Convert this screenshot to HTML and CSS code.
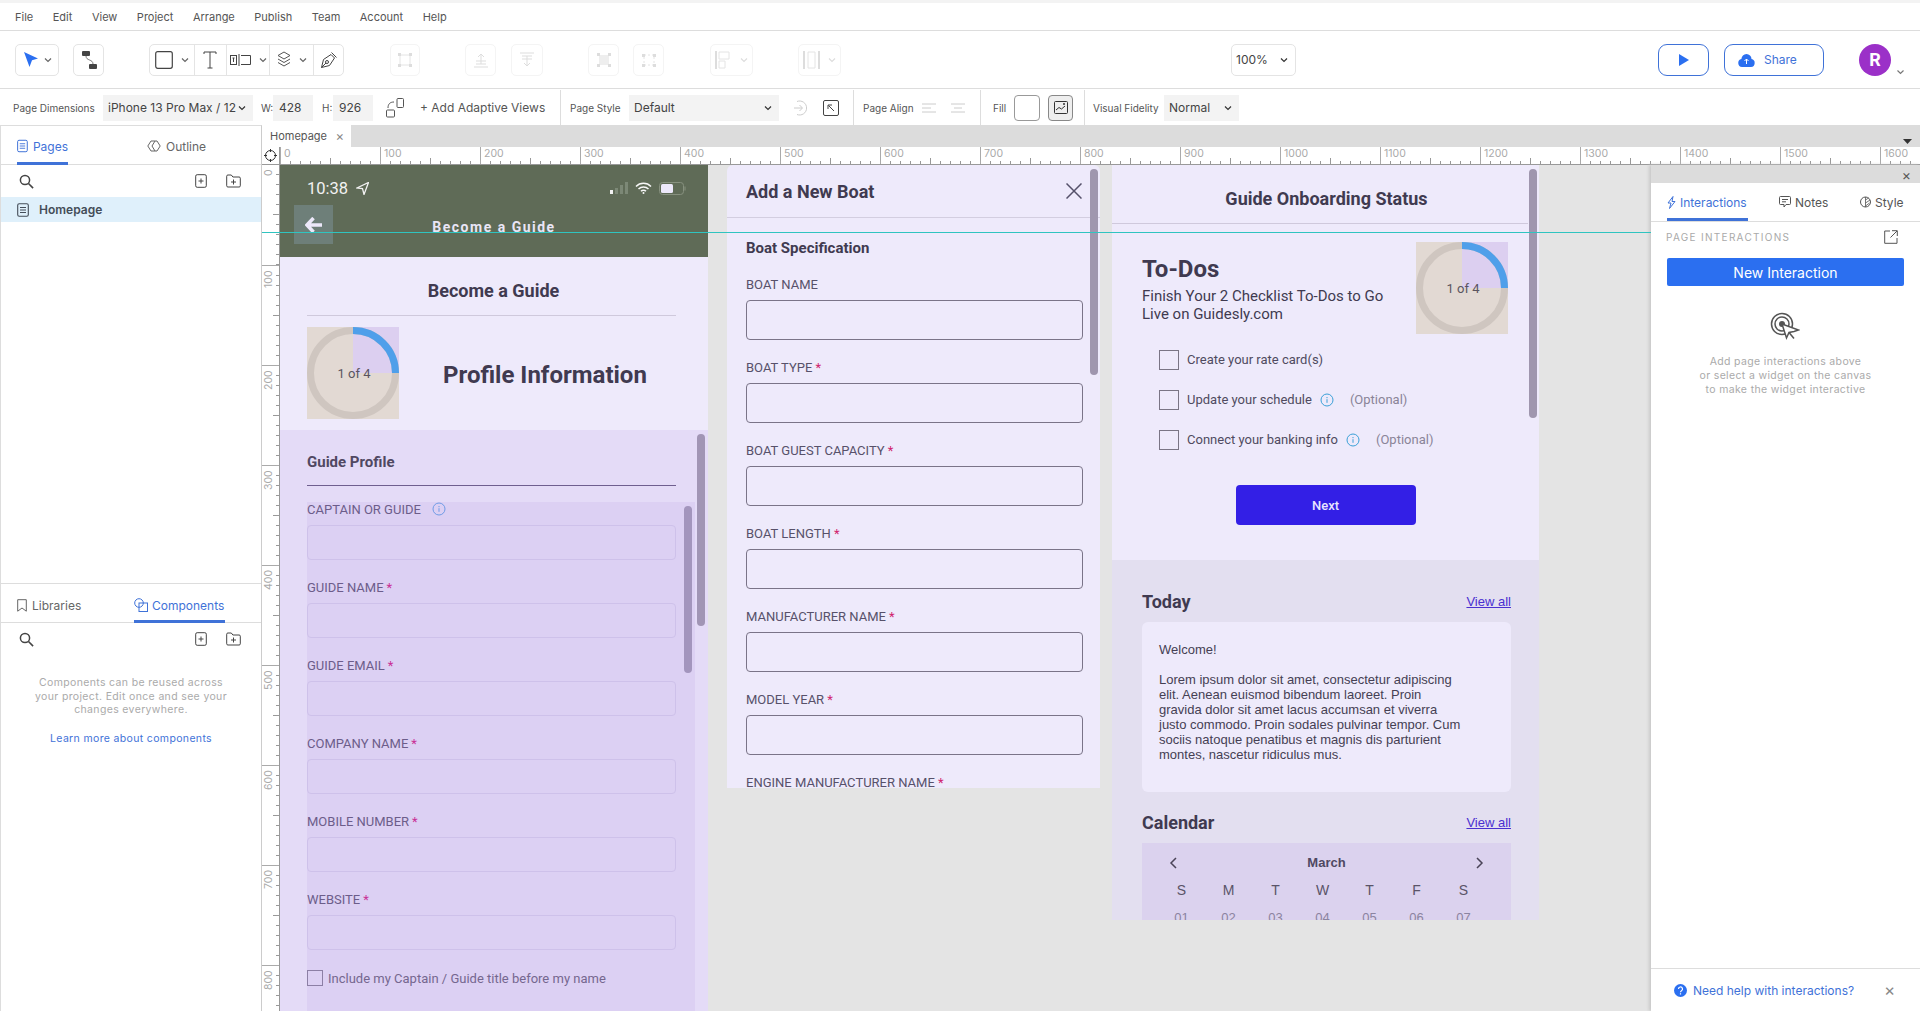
FILE: index.html
```html
<!DOCTYPE html>
<html>
  <head>
    <title>Homepage</title>
    <link rel="stylesheet" href="styles.css">
  </head>

  <body>
    <svg class="defs" width="0" height="0">
      <symbol id="chev" viewBox="0 0 8 6"><path d="M1 1.5l3 3 3-3" fill="none" stroke="currentColor" stroke-width="1.2"/></symbol>
      <symbol id="doc" viewBox="0 0 12 14"><rect x=".7" y=".7" width="10.6" height="12.6" rx="1.5" fill="none" stroke="currentColor" stroke-width="1.1"/><path d="M3 4.5h6M3 7h6M3 9.5h6" stroke="currentColor" stroke-width="1"/></symbol>
      <symbol id="search" viewBox="0 0 15 15"><circle cx="6" cy="6" r="4.6" fill="none" stroke="currentColor" stroke-width="1.5"/><path d="M9.5 9.5l4.6 4.6" stroke="currentColor" stroke-width="1.6"/></symbol>
      <symbol id="addpage" viewBox="0 0 12 14"><rect x=".7" y=".7" width="10.6" height="12.6" rx="1.5" fill="none" stroke="currentColor" stroke-width="1"/><path d="M3.5 7h5M6 4.5v5" stroke="currentColor"/></symbol>
      <symbol id="addfolder" viewBox="0 0 15 14"><path d="M.7 2.2q0-1.2 1.2-1.2h3.4l1.6 2h6.2q1.2 0 1.2 1.2v7.6q0 1.2-1.2 1.2H1.9q-1.2 0-1.2-1.2z" fill="none" stroke="currentColor" stroke-width="1"/><path d="M5 8h5M7.5 5.5v5" stroke="currentColor"/></symbol>
      <symbol id="info" viewBox="0 0 14 14"><circle cx="7" cy="7" r="6" fill="none" stroke="currentColor" stroke-width="1"/><path d="M7 6.2v3.6M7 4v1.2" stroke="currentColor"/></symbol>
      <symbol id="ring" viewBox="0 0 92 92">
        <rect width="92" height="92" fill="#e2d9d3"/>
        <rect x="46" width="46" height="46" fill="#dccff0"/>
        <circle cx="46" cy="46" r="42.5" fill="none" stroke="#cfc6c0" stroke-width="7"/>
        <path d="M46 3.5A42.5 42.5 0 0 1 88.500 46" fill="none" stroke="#4f9fea" stroke-width="7"/>
      </symbol>
    </svg>

    <div class="top-strip"></div>

    <div class="menubar">
      <span>File</span><span>Edit</span><span>View</span><span>Project</span><span>Arrange</span><span>Publish</span><span>Team</span><span>Account</span><span>Help</span>
    </div>

    <div class="toolbar">
      <div class="tool select-tool">
        <svg width="16" height="17" viewBox="0 0 16 17"><path d="M1 1l14 6.500-6 1.800-2.500 6.700z" fill="#2b6ff0"/></svg>
        <svg class="chev" width="8" height="6"><use href="#chev"/></svg>
      </div>
      <div class="tool connector-tool">
        <svg width="16" height="20" viewBox="0 0 16 20"><rect x="1" y="1" width="8" height="5" rx="1" fill="#444"/><rect x="8" y="14" width="8" height="5" rx="1" fill="#444"/><path d="M5 6c0 5 7 3 7 8" fill="none" stroke="#777"/></svg>
      </div>
      <div class="tool shapes-tool">
        <div class="seg seg-shape">
          <svg width="18" height="18" viewBox="0 0 18 18"><rect x=".7" y=".7" width="16.600" height="16.600" rx="2" fill="none" stroke="#444" stroke-width="1.200"/></svg>
          <svg class="chev" width="8" height="6"><use href="#chev"/></svg>
        </div>
        <div class="seg seg-text">
          <svg width="14" height="18" viewBox="0 0 14 18"><path d="M1 3V1h12v2M7 1v16M4.500 17h5" fill="none" stroke="#444"/></svg>
        </div>
        <div class="seg seg-field">
          <svg width="21" height="12" viewBox="0 0 21 12"><rect x=".5" y="1.500" width="6" height="9" fill="none" stroke="#444"/><path d="M2.500 4h2M3.500 4v4" stroke="#444"/><path d="M9 0v12" stroke="#444"/><path d="M11 1.500h9.500v9H11" fill="none" stroke="#444"/></svg>
          <svg class="chev" width="8" height="6"><use href="#chev"/></svg>
        </div>
        <div class="seg seg-layers">
          <svg width="14" height="17" viewBox="0 0 14 17"><path d="M7 1l6 3.500-6 3.500-6-3.500zM1 8l6 3.500L13 8M1 11.500L7 15l6-3.500" fill="none" stroke="#555"/></svg>
          <svg class="chev" width="8" height="6"><use href="#chev"/></svg>
        </div>
        <div class="seg seg-pen">
          <svg width="18" height="18" viewBox="0 0 18 18"><path d="M1.500 16.500l2-8L11 3.500l3.500 3.500-5 7.500zM1.500 16.500l4.500-4.500M11.500 1.500l5 5" fill="none" stroke="#444"/><circle cx="7" cy="11" r="1.500" fill="none" stroke="#444"/></svg>
        </div>
      </div>

      <div class="tool off off-1"><svg width="16" height="16" viewBox="0 0 16 16"><path d="M3 3h10v10H3z" fill="none" stroke="#e4e4e4"/><path d="M1 1h3v3H1zM12 1h3v3h-3zM1 12h3v3H1zM12 12h3v3h-3z" fill="#ddd"/></svg></div>
      <div class="tool off off-2"><svg width="16" height="16" viewBox="0 0 16 16"><path d="M1 15h14M3 12h10M3 9h10M8 2v10M5 5l3-3 3 3" fill="none" stroke="#ddd"/></svg></div>
      <div class="tool off off-3"><svg width="16" height="16" viewBox="0 0 16 16"><path d="M1 1h14M3 4h10M3 7h10M8 4v10M5 11l3 3 3-3" fill="none" stroke="#ddd"/></svg></div>
      <div class="tool off off-4"><svg width="16" height="16" viewBox="0 0 16 16"><path d="M3 3h10v10H3z" fill="#eee"/><path d="M1 1h3v3H1zM12 1h3v3h-3zM1 12h3v3H1zM12 12h3v3h-3z" fill="#ddd"/></svg></div>
      <div class="tool off off-5"><svg width="16" height="16" viewBox="0 0 16 16"><path d="M3 3h10v10H3z" fill="none" stroke="#e4e4e4" stroke-dasharray="2 2"/><path d="M1 2h3v3H1zM12 2h3v3h-3zM1 12h3v3H1zM12 12h3v3h-3z" fill="#ddd"/></svg></div>
      <div class="tool off off-6">
        <svg width="18" height="18" viewBox="0 0 18 18"><path d="M1 0v18" stroke="#ddd" stroke-width="2"/><path d="M4 1h10v7H4zM4 10h6v7H4z" fill="none" stroke="#e4e4e4"/></svg>
        <svg class="chev" width="8" height="6"><use href="#chev"/></svg>
      </div>
      <div class="tool off off-7">
        <svg width="18" height="18" viewBox="0 0 18 18"><path d="M1 0v18M16 0v18" stroke="#ddd" stroke-width="2"/><path d="M5 1h7v16H5z" fill="none" stroke="#e4e4e4"/></svg>
        <svg class="chev" width="8" height="6"><use href="#chev"/></svg>
      </div>

      <div class="tool zoom-select">
        <span>100%</span>
        <svg class="chev dark" width="8" height="6"><use href="#chev"/></svg>
      </div>
      <div class="tool play-btn">
        <svg width="10" height="12" viewBox="0 0 10 12"><path d="M0 0l10 6-10 6z" fill="#2b6ff0"/></svg>
      </div>
      <div class="tool share-btn">
        <svg width="17" height="14" viewBox="0 0 17 14"><path d="M4 14a4 4 0 0 1-.6-7.900A5.200 5.200 0 0 1 8.500 1a5.200 5.200 0 0 1 5 5.100A4 4 0 0 1 13 14z" fill="#2b6ff0"/><path d="M8.500 11V6M6.500 8l2-2 2 2" fill="none" stroke="#fff"/></svg>
        <span>Share</span>
      </div>
      <div class="avatar">R</div>
      <svg class="avatar-chev" width="9" height="6"><use href="#chev"/></svg>
    </div>

    <div class="propbar">
      <span class="prop-label dims-label">Page Dimensions</span>
      <div class="prop-select dims-select"><span>iPhone 13 Pro Max / 12</span><svg class="chev dark" width="8" height="6"><use href="#chev"/></svg></div>
      <span class="prop-label small w-label">W:</span>
      <div class="prop-input">428</div>
      <span class="prop-label small h-label">H:</span>
      <div class="prop-input">926</div>
      <svg class="adaptive-icon" width="18" height="20" viewBox="0 0 18 20"><rect x=".5" y="12" width="8" height="7" rx="1" fill="none" stroke="#555"/><rect x="11" y=".5" width="6.500" height="9" rx="1" fill="none" stroke="#555"/><path d="M2 10c0-4 2-6 6-6" fill="none" stroke="#555"/></svg>
      <span class="add-views">+ Add Adaptive Views</span>
      <div class="prop-sep sep-1"></div>
      <span class="prop-label style-label">Page Style</span>
      <div class="prop-select style-select"><span>Default</span><svg class="chev dark" width="8" height="6"><use href="#chev"/></svg></div>
      <svg class="style-out" width="14" height="16" viewBox="0 0 14 16"><path d="M4 1.500a7 7 0 1 1 0 13M1 8h8M6.500 5l3 3-3 3" fill="none" stroke="#ccc"/></svg>
      <div class="style-in"><svg width="8" height="8" viewBox="0 0 8 8"><path d="M7 7L1.500 1.500M1 5V1h4" fill="none" stroke="#444"/></svg></div>
      <div class="prop-sep sep-2"></div>
      <span class="prop-label align-label">Page Align</span>
      <svg class="align-a" width="14" height="10" viewBox="0 0 14 10"><path d="M0 1h14M0 5h9M0 9h14" stroke="#ccc"/></svg>
      <svg class="align-b" width="14" height="10" viewBox="0 0 14 10"><path d="M0 1h14M3 5h8M0 9h14" stroke="#ccc"/></svg>
      <div class="prop-sep sep-3"></div>
      <span class="prop-label fill-label">Fill</span>
      <div class="fill-swatch"></div>
      <div class="fill-image"><svg width="14" height="14" viewBox="0 0 14 14"><rect x=".5" y=".5" width="13" height="12" rx="1" fill="none" stroke="#333"/><path d="M2 9l3-2.500L7.500 8 11 5" fill="none" stroke="#333"/><circle cx="10" cy="3" r="1" fill="#333"/></svg></div>
      <div class="prop-sep sep-4"></div>
      <span class="prop-label fidelity-label">Visual Fidelity</span>
      <div class="prop-select fidelity-select"><span>Normal</span><svg class="chev dark" width="8" height="6"><use href="#chev"/></svg></div>
    </div>

    <div class="main">
      <div class="left-panel">
        <div class="panel-top">
          <div class="panel-tabs">
            <div class="panel-tab active pages-tab">
              <svg width="12" height="14"><use href="#doc"/></svg><span>Pages</span>
            </div>
            <div class="panel-tab outline-tab">
              <svg width="14" height="12" viewBox="0 0 14 12"><path d="M4 1L.8 6 4 11h6l3.200-5L10 1z" fill="none" stroke="currentColor"/><path d="M8 1L5 6l3 5" fill="none" stroke="currentColor"/></svg><span>Outline</span>
            </div>
          </div>
          <div class="panel-search">
            <svg class="search-icon" width="15" height="15"><use href="#search"/></svg>
            <svg class="add-page" width="12" height="14"><use href="#addpage"/></svg>
            <svg class="add-folder" width="15" height="14"><use href="#addfolder"/></svg>
          </div>
          <div class="page-row">
            <svg width="12" height="14"><use href="#doc"/></svg><span>Homepage</span>
          </div>
        </div>
        <div class="panel-bottom">
          <div class="panel-tabs">
            <div class="panel-tab libraries-tab">
              <svg width="10" height="13" viewBox="0 0 10 13"><path d="M.7.7h8.600v11.500L5 9 .7 12.200z" fill="none" stroke="currentColor"/></svg><span>Libraries</span>
            </div>
            <div class="panel-tab active components-tab">
              <svg width="14" height="14" viewBox="0 0 14 14"><circle cx="5" cy="5" r="4.300" fill="none" stroke="currentColor"/><rect x="5" y="5" width="8.500" height="8.500" fill="none" stroke="currentColor"/></svg><span>Components</span>
            </div>
          </div>
          <div class="panel-search">
            <svg class="search-icon" width="15" height="15"><use href="#search"/></svg>
            <svg class="add-page" width="12" height="14"><use href="#addpage"/></svg>
            <svg class="add-folder" width="15" height="14"><use href="#addfolder"/></svg>
          </div>
          <p class="components-help">Components can be reused across your project. Edit once and see your changes everywhere.</p>
          <p class="components-link">Learn more about components</p>
        </div>
      </div>

      <div class="workspace">
        <div class="tabstrip">
          <div class="doc-tab"><span>Homepage</span><i>×</i></div>
          <svg class="tabstrip-arrow" width="9" height="6" viewBox="0 0 9 6"><path d="M0 0h9L4.500 5z" fill="#333"/></svg>
        </div>

        <div class="hruler">
          <div class="ruler-corner">
            <svg width="13" height="13" viewBox="0 0 13 13"><circle cx="6.500" cy="6.500" r="5" fill="none" stroke="#333"/><path d="M6.500 0v3M6.500 10v3M0 6.500h3M10 6.500h3" stroke="#333"/></svg>
          </div>
          <span>0</span><span>100</span><span>200</span><span>300</span><span>400</span><span>500</span><span>600</span><span>700</span><span>800</span><span>900</span><span>1000</span><span>1100</span><span>1200</span><span>1300</span><span>1400</span><span>1500</span><span>1600</span>
        </div>

        <div class="canvas-row">
          <div class="vruler">
            <div class="vcell"><span>0</span></div>
            <div class="vcell"><span>100</span></div>
            <div class="vcell"><span>200</span></div>
            <div class="vcell"><span>300</span></div>
            <div class="vcell"><span>400</span></div>
            <div class="vcell"><span>500</span></div>
            <div class="vcell"><span>600</span></div>
            <div class="vcell"><span>700</span></div>
            <div class="vcell"><span>800</span></div>
          </div>

          <div class="canvas">
            <div class="board phone">
              <div class="phone-head">
                <div class="status-bar">
                  <span class="clock">10:38</span>
                  <svg class="loc" width="13" height="13" viewBox="0 0 13 13"><path d="M12.500.5L1 6l5.500.7L8 12.500z" fill="none" stroke="#f2f2f2" stroke-width="1.300"/></svg>
                  <svg class="signal" width="19" height="12" viewBox="0 0 19 12"><rect y="8" width="3" height="4" fill="#f2f2f2"/><rect x="5" y="6" width="3" height="6" fill="#7c8876"/><rect x="10" y="3" width="3" height="9" fill="#7c8876"/><rect x="15" width="3" height="12" fill="#7c8876"/></svg>
                  <svg class="wifi" width="17" height="12" viewBox="0 0 17 12"><path d="M1 4.500a10.500 10.500 0 0 1 15 0M3.500 7a7 7 0 0 1 10 0M6 9.300a3.500 3.500 0 0 1 5 0" fill="none" stroke="#f7f7f7" stroke-width="1.500"/><circle cx="8.500" cy="11" r="1" fill="#f7f7f7"/></svg>
                  <svg class="battery" width="27" height="13" viewBox="0 0 27 13"><rect x=".5" y=".5" width="24" height="12" rx="3" fill="none" stroke="#87917f"/><rect x="2" y="2" width="12" height="9" rx="1.500" fill="#ece8fa"/><rect x="25.500" y="4.500" width="1" height="4" fill="#87917f"/></svg>
                </div>
                <div class="phone-nav">
                  <div class="back-btn">
                    <svg width="18" height="16" viewBox="0 0 18 16"><path d="M8.500 1L2 8l6.500 7M2.500 8H17" fill="none" stroke="#ece8fa" stroke-width="3.500"/></svg>
                  </div>
                  <span class="phone-title">Become a Guide</span>
                </div>
              </div>

              <div class="phone-intro">
                <div class="phone-heading">Become a Guide</div>
                <div class="progress-row">
                  <div class="ring"><svg width="92" height="92"><use href="#ring"/></svg><span>1 of 4</span></div>
                  <div class="progress-title">Profile Information</div>
                </div>
              </div>

              <div class="profile-section">
                <div class="profile-title">Guide Profile</div>
                <div class="profile-scroll">
                  <div class="lilac-field"><label>CAPTAIN OR GUIDE <svg class="cap-info" width="14" height="14"><use href="#info"/></svg></label><div class="lilac-input"></div></div>
                  <div class="lilac-field"><label>GUIDE NAME <b>*</b></label><div class="lilac-input"></div></div>
                  <div class="lilac-field"><label>GUIDE EMAIL <b>*</b></label><div class="lilac-input"></div></div>
                  <div class="lilac-field"><label>COMPANY NAME <b>*</b></label><div class="lilac-input"></div></div>
                  <div class="lilac-field"><label>MOBILE NUMBER <b>*</b></label><div class="lilac-input"></div></div>
                  <div class="lilac-field"><label>WEBSITE <b>*</b></label><div class="lilac-input"></div></div>
                  <div class="lilac-check"><i></i><span>Include my Captain / Guide title before my name</span></div>
                  <div class="scrollbar inner-scroll"></div>
                </div>
                <div class="scrollbar outer-scroll"></div>
              </div>
            </div>

            <div class="board boat">
              <div class="boat-head">
                <span>Add a New Boat</span>
                <svg width="16" height="16" viewBox="0 0 16 16"><path d="M.5.5l15 15M15.500.5l-15 15" stroke="#55516a" stroke-width="1.500"/></svg>
              </div>
              <div class="boat-title">Boat Specification</div>
              <div class="boat-field"><label>BOAT NAME</label><div class="boat-input"></div></div>
              <div class="boat-field"><label>BOAT TYPE <b>*</b></label><div class="boat-input"></div></div>
              <div class="boat-field"><label>BOAT GUEST CAPACITY <b>*</b></label><div class="boat-input"></div></div>
              <div class="boat-field"><label>BOAT LENGTH <b>*</b></label><div class="boat-input"></div></div>
              <div class="boat-field"><label>MANUFACTURER NAME <b>*</b></label><div class="boat-input"></div></div>
              <div class="boat-field"><label>MODEL YEAR <b>*</b></label><div class="boat-input"></div></div>
              <div class="boat-field"><label>ENGINE MANUFACTURER NAME <b>*</b></label></div>
              <div class="scrollbar boat-scroll"></div>
            </div>

            <div class="board status">
              <div class="status-top">
                <div class="status-head">Guide Onboarding Status</div>
                <div class="todo-row">
                  <div class="todo-text">
                    <div class="todo-title">To-Dos</div>
                    <div class="todo-sub">Finish Your 2 Checklist To-Dos to Go Live on Guidesly.com</div>
                  </div>
                  <div class="ring"><svg width="92" height="92"><use href="#ring"/></svg><span>1 of 4</span></div>
                </div>
                <div class="check-list">
                  <div class="check-item"><i></i><span>Create your rate card(s)</span></div>
                  <div class="check-item"><i></i><span>Update your schedule</span><svg width="14" height="14"><use href="#info"/></svg><em>(Optional)</em></div>
                  <div class="check-item"><i></i><span>Connect your banking info</span><svg width="14" height="14"><use href="#info"/></svg><em>(Optional)</em></div>
                </div>
                <div class="next-btn">Next</div>
              </div>

              <div class="status-bottom">
                <div class="status-row"><span>Today</span><a>View all</a></div>
                <div class="today-card">
                  <p>Welcome!</p>
                  <p>Lorem ipsum dolor sit amet, consectetur adipiscing elit. Aenean euismod bibendum laoreet. Proin gravida dolor sit amet lacus accumsan et viverra justo commodo. Proin sodales pulvinar tempor. Cum sociis natoque penatibus et magnis dis parturient montes, nascetur ridiculus mus.</p>
                </div>
                <div class="status-row calendar-row"><span>Calendar</span><a>View all</a></div>
                <div class="calendar">
                  <div class="cal-head">
                    <svg width="8" height="12" viewBox="0 0 8 12"><path d="M7 1L2 6l5 5" fill="none" stroke="#4a4458" stroke-width="1.500"/></svg>
                    <span>March</span>
                    <svg width="8" height="12" viewBox="0 0 8 12"><path d="M1 1l5 5-5 5" fill="none" stroke="#4a4458" stroke-width="1.500"/></svg>
                  </div>
                  <div class="cal-grid cal-days">
                    <span>S</span><span>M</span><span>T</span><span>W</span><span>T</span><span>F</span><span>S</span>
                  </div>
                  <div class="cal-grid cal-dates">
                    <span>01</span><span>02</span><span>03</span><span>04</span><span>05</span><span>06</span><span>07</span>
                  </div>
                </div>
              </div>
              <div class="scrollbar status-scroll"></div>
            </div>
          </div>

          <div class="right-panel">
            <div class="right-close"><span>×</span></div>
            <div class="right-tabs">
              <div class="right-tab active interactions-tab">
                <svg width="9" height="13" viewBox="0 0 9 13"><path d="M6 .5L1 7h3l-1.500 5.500L8 5.500H5z" fill="none" stroke="currentColor"/></svg><span>Interactions</span>
              </div>
              <div class="right-tab notes-tab">
                <svg width="12" height="12" viewBox="0 0 12 12"><path d="M1.500.5h9q1 0 1 1v6q0 1-1 1H7l-2 2.500v-2.500H1.500q-1 0-1-1v-6q0-1 1-1zM3 3.500h6M3 5.800h4" fill="none" stroke="currentColor"/></svg><span>Notes</span>
              </div>
              <div class="right-tab style-tab">
                <svg width="11" height="12" viewBox="0 0 11 12"><circle cx="5.500" cy="6" r="5" fill="none" stroke="currentColor"/><path d="M5.500 1v10M5.500 4l3-2M5.500 7l4.500-3M5.500 10l4-3" fill="none" stroke="currentColor" stroke-width=".8"/></svg><span>Style</span>
              </div>
            </div>
            <div class="right-label">
              <span>PAGE INTERACTIONS</span>
              <svg width="14" height="14" viewBox="0 0 14 14"><path d="M6 1H.7v12.300H13V8M8 .7h5.300V6M13 1L6.500 7.500" fill="none" stroke="#555"/></svg>
            </div>
            <div class="new-interaction">New Interaction</div>
            <svg class="target-icon" width="30" height="30" viewBox="0 0 30 30">
              <circle cx="12" cy="12" r="10.500" fill="none" stroke="#555" stroke-width="1.500"/>
              <circle cx="12" cy="12" r="7" fill="none" stroke="#555" stroke-width="1.500"/>
              <circle cx="12" cy="12" r="3" fill="#555"/>
              <path d="M12 12l4.500 14 2.500-5.500 5-1 4.500-1.500z" fill="#fff" stroke="#555" stroke-width="1.500"/>
              <path d="M19 20.500l5 6" stroke="#555" stroke-width="1.500"/>
            </svg>
            <p class="right-help">Add page interactions above<br>or select a widget on the canvas<br>to make the widget interactive</p>
            <div class="right-footer">
              <svg width="13" height="13" viewBox="0 0 13 13"><circle cx="6.500" cy="6.500" r="6.500" fill="#2b6ff0"/><path d="M4.500 5a2 2 0 1 1 3 1.700c-.7.400-1 .8-1 1.500M6.500 9.300v1.200" fill="none" stroke="#fff" stroke-width="1.200"/></svg>
              <span>Need help with interactions?</span>
              <i>×</i>
            </div>
          </div>

          <div class="guide-line"></div>
        </div>
      </div>
    </div>
  </body>
</html>
```

FILE: styles.css
```css
* {
  box-sizing: border-box;
}

html,
body {
  margin: 0;
  height: 1011px;
  overflow: hidden;
}

body {
  display: flex;
  flex-direction: column;
  font-family: "Inter", "Liberation Sans", sans-serif;
  color: #444;
  background: #fff;
}

p {
  margin: 0;
}

i,
em {
  font-style: normal;
}

.defs {
  position: absolute;
}

.chev {
  color: #666;
}
.chev.dark {
  color: #333;
}

.top-strip {
  height: 3px;
  background: #f3f3f3;
}

.menubar {
  height: 28px;
  display: flex;
  align-items: center;
  padding-left: 15px;
  gap: 19.500px;
  font-size: 11px;
  color: #555;
  border-bottom: 1px solid #ddd;
}

/* toolbar */
.toolbar {
  height: 58px;
  display: flex;
  align-items: center;
  padding-left: 15px;
  border-bottom: 1px solid #ddd;
}

.tool {
  height: 32px;
  flex: none;
  display: flex;
  align-items: center;
  justify-content: center;
  border: 1px solid #e4e4e4;
  border-radius: 5px;
}
.select-tool {
  width: 44px;
  gap: 5px;
}
.connector-tool {
  width: 31px;
  margin-left: 14px;
}
.shapes-tool {
  width: 195px;
  margin-left: 45px;
  justify-content: flex-start;
}
.seg {
  height: 100%;
  display: flex;
  align-items: center;
  justify-content: center;
  gap: 8px;
  border-left: 1px solid #e4e4e4;
}
.seg-shape {
  width: 44px;
  border-left: 0;
}
.seg-text {
  width: 32px;
}
.seg-field {
  width: 44px;
}
.seg-layers {
  width: 44px;
}
.seg-pen {
  width: 30px;
}

.tool.off {
  border-color: #f4f4f4;
  gap: 7px;
}
.tool.off .chev {
  color: #ddd;
}
.off-1 {
  width: 30px;
  margin-left: 46px;
}
.off-2 {
  width: 31px;
  margin-left: 45px;
}
.off-3 {
  width: 32px;
  margin-left: 15px;
}
.off-4 {
  width: 31px;
  margin-left: 45px;
}
.off-5 {
  width: 31px;
  margin-left: 14px;
}
.off-6 {
  width: 43px;
  margin-left: 46px;
}
.off-7 {
  width: 43px;
  margin-left: 45px;
}

.zoom-select {
  width: 65px;
  margin-left: 390px;
  justify-content: space-between;
  padding: 0 7px 0 4px;
  font-size: 12px;
}
.play-btn {
  width: 51px;
  margin-left: 362px;
  border: 1px solid #3f72d8;
  border-radius: 9px;
}
.share-btn {
  width: 100px;
  margin-left: 15px;
  border: 1px solid #3f72d8;
  border-radius: 9px;
  justify-content: flex-start;
  padding-left: 13px;
  gap: 9px;
  font-size: 12px;
  color: #3f72d8;
}
.avatar {
  width: 32px;
  height: 32px;
  margin-left: 35px;
  flex: none;
  border-radius: 50%;
  background: #9b30c8;
  color: #fff;
  font-family: "Roboto", sans-serif;
  font-weight: 700;
  font-size: 18px;
  display: flex;
  align-items: center;
  justify-content: center;
}
.avatar-chev {
  margin: 24px 0 0 5px;
  color: #777;
}

/* page properties */
.propbar {
  height: 36px;
  display: flex;
  align-items: center;
  padding: 1px 0 0 13px;
  font-size: 12px;
}
.prop-label {
  font-size: 10px;
  color: #555;
  flex: none;
  white-space: nowrap;
}
.dims-label {
  width: 90px;
}
.prop-select {
  height: 26px;
  background: #f3f3f3;
  flex: none;
  display: flex;
  align-items: center;
  justify-content: space-between;
  padding: 0 7px 0 5px;
  color: #444;
  white-space: nowrap;
  overflow: hidden;
}
.dims-select {
  width: 150px;
  font-size: 12px;
}
.w-label {
  margin-left: 8px;
  width: 12px;
}
.h-label {
  margin-left: 9px;
  width: 11px;
}
.prop-input {
  width: 40px;
  height: 26px;
  background: #f3f3f3;
  display: flex;
  align-items: center;
  padding-left: 6px;
  font-size: 12px;
}
.adaptive-icon {
  margin-left: 13px;
  flex: none;
}
.add-views {
  margin-left: 16px;
  width: 125px;
  font-size: 12px;
  color: #555;
  white-space: nowrap;
}
.prop-sep {
  width: 1px;
  height: 35px;
  background: #ddd;
  flex: none;
}
.sep-1 {
  margin: 0 9px 0 15px;
}
.style-label {
  width: 50px;
}
.style-select {
  width: 150px;
  margin-left: 9px;
}
.style-out {
  margin-left: 14px;
  flex: none;
}
.style-in {
  width: 16px;
  height: 16px;
  margin-left: 16px;
  border: 1px solid #444;
  border-radius: 2px;
  display: flex;
  align-items: center;
  justify-content: center;
  flex: none;
}
.sep-2 {
  margin: 0 9px 0 14px;
}
.align-label {
  width: 50px;
}
.align-a {
  margin-left: 9px;
  flex: none;
}
.align-b {
  margin-left: 15px;
  flex: none;
}
.sep-3 {
  margin: 0 12px 0 15px;
}
.fill-label {
  width: 21px;
}
.fill-swatch {
  width: 26px;
  height: 26px;
  border: 1px solid #999;
  border-radius: 4px;
  flex: none;
}
.fill-image {
  width: 25px;
  height: 26px;
  margin-left: 8px;
  border: 1px solid #888;
  border-radius: 4px;
  background: #eee;
  display: flex;
  align-items: center;
  justify-content: center;
  flex: none;
}
.sep-4 {
  margin: 0 8px 0 11px;
}
.fidelity-label {
  width: 64px;
}
.fidelity-select {
  width: 75px;
  margin-left: 7px;
}

/* main area */
.main {
  flex: 1;
  min-height: 0;
  display: flex;
}

.left-panel {
  width: 262px;
  flex: none;
  display: flex;
  flex-direction: column;
  border-top: 1px solid #ddd;
  border-right: 1px solid #ccc;
  border-left: 1px solid #ddd;
}
.panel-top {
  height: 458px;
  border-bottom: 1px solid #ddd;
}
.panel-bottom {
  flex: 1;
}

.panel-tabs {
  height: 39px;
  display: flex;
  position: relative;
  border-bottom: 1px solid #ddd;
}
.panel-tab {
  position: absolute;
  top: 0;
  height: 39px;
  display: flex;
  align-items: center;
  gap: 5px;
  font-size: 12px;
  color: #666;
  padding-top: 3px;
}
.panel-tab.active {
  color: #3f72d8;
  border-bottom: 3px solid #3f72d8;
  padding-top: 6px;
}
.panel-tab.pages-tab {
  left: 16px;
  width: 51px;
  padding-top: 4px;
}
.panel-tab.outline-tab {
  left: 146px;
  padding-top: 1px;
}
.libraries-tab {
  left: 16px;
}
.components-tab {
  left: 133px;
  width: 91px;
  gap: 4px;
}

.panel-search {
  height: 32px;
  display: flex;
  align-items: center;
  color: #444;
}
.search-icon {
  margin-left: 18px;
}
.add-page {
  margin-left: 161px;
}
.add-folder {
  margin-left: 19px;
}

.page-row {
  height: 25px;
  background: #dff0fb;
  display: flex;
  align-items: center;
  padding-left: 16px;
  gap: 10px;
  font-size: 12px;
  font-weight: 600;
  color: #444d58;
}

.components-help {
  width: 196px;
  margin: 21px 0 0 32px;
  font-size: 10.500px;
  line-height: 13.500px;
  text-align: center;
  letter-spacing: .35px;
  color: #aaa;
}
.components-link {
  margin-top: 15px;
  text-align: center;
  font-size: 10.500px;
  letter-spacing: .35px;
  color: #3f72d8;
}

.workspace {
  flex: 1;
  min-width: 0;
  display: flex;
  flex-direction: column;
}

.tabstrip {
  height: 22px;
  background: #dcdcdc;
  display: flex;
  justify-content: space-between;
  flex: none;
}
.doc-tab {
  width: 89px;
  background: #fff;
  display: flex;
  align-items: center;
  justify-content: space-between;
  padding: 0 7px 0 8px;
  font-size: 11px;
  color: #555;
}
.doc-tab i {
  color: #888;
  font-size: 13px;
}
.tabstrip-arrow {
  margin: 14px 8px 0 0;
}

.hruler {
  height: 18px;
  display: flex;
  flex: none;
  overflow: hidden;
  background: #fff;
  border-bottom: 1px solid #999;
}
.ruler-corner {
  width: 18px;
  flex: none;
  display: flex;
  align-items: center;
  justify-content: center;
  border-right: 1px solid #999;
}
.hruler span {
  width: 100px;
  flex: none;
  padding-left: 3px;
  font-size: 10.500px;
  line-height: 13px;
  color: #aaa;
  border-left: 1px solid #aaa;
  background:
    linear-gradient(#999, #999) 49px 100% / 1px 6px no-repeat,
    repeating-linear-gradient(90deg, transparent 0 9px, #999 9px 10px) 0 100% / 100% 3px no-repeat;
}

.canvas-row {
  flex: 1;
  min-height: 0;
  display: flex;
  position: relative;
}

.vruler {
  width: 18px;
  flex: none;
  overflow: hidden;
  background: #fff;
  border-right: 1px solid #999;
}
.vcell {
  height: 100px;
  border-top: 1px solid #aaa;
  background:
    linear-gradient(#999, #999) 100% 49px / 6px 1px no-repeat,
    repeating-linear-gradient(180deg, transparent 0 9px, #999 9px 10px) 100% 0 / 3px 100% no-repeat;
}
.vcell:first-child {
  border-top: 0;
}
.vcell span {
  display: block;
  width: 14px;
  height: 30px;
  padding-bottom: 4px;
  writing-mode: vertical-rl;
  transform: rotate(180deg);
  text-align: right;
  font-size: 10.500px;
  line-height: 13px;
  color: #aaa;
}

.canvas {
  flex: 1;
  min-width: 0;
  position: relative;
  overflow: hidden;
  background: #e4e4e4;
  font-family: "Roboto", sans-serif;
}

.guide-line {
  position: absolute;
  top: 67px;
  left: 0;
  right: 269px;
  height: 1px;
  background: #2fc4c0;
}

/* artboards sit on the free canvas */
.board {
  position: absolute;
  top: 0;
}

.scrollbar {
  position: absolute;
  width: 8px;
  border-radius: 4px;
  background: #9f96ae;
}

.phone {
  left: 0;
  width: 428px;
  height: 926px;
  background: #e4dbf7;
}

.phone-head {
  height: 92px;
  background: #5f6b57;
}
.status-bar {
  height: 40px;
  display: flex;
  align-items: center;
  padding: 6px 0 0 27px;
  color: #f2f2f2;
}
.clock {
  font-size: 16.500px;
  width: 49px;
}
.signal {
  margin-left: 241px;
}
.wifi {
  margin-left: 6px;
}
.battery {
  margin-left: 7px;
}
.phone-nav {
  display: grid;
  grid-template-columns: 1fr auto 1fr;
  align-items: center;
  padding-left: 14px;
}
.back-btn {
  width: 39px;
  height: 39px;
  background: #6e7f79;
  display: flex;
  align-items: center;
  justify-content: center;
}
.phone-title {
  font-size: 14px;
  font-weight: 700;
  letter-spacing: 1.500px;
  color: #e9e5f6;
  padding: 5px 14px 0 0;
}

.phone-intro {
  height: 173px;
  background: #eeeafb;
  padding: 0 32px 0 27px;
}
.phone-heading {
  height: 59px;
  display: flex;
  align-items: center;
  justify-content: center;
  padding: 8px 0 0 4px;
  font-size: 18px;
  font-weight: 700;
  color: #403a50;
  border-bottom: 1px solid #cfc9dc;
}
.progress-row {
  display: flex;
  align-items: center;
  margin-top: 11px;
}
.progress-title {
  margin-left: 44px;
  padding-top: 3px;
  font-size: 24px;
  font-weight: 700;
  color: #403a50;
}

.ring {
  width: 92px;
  height: 92px;
  flex: none;
  position: relative;
}
.ring svg {
  display: block;
}
.ring span {
  position: absolute;
  top: 39px;
  left: 0;
  width: 100%;
  padding-left: 2px;
  text-align: center;
  font-size: 13px;
  line-height: 16px;
  color: #5a5460;
}

.profile-section {
  position: relative;
  height: 669px;
}
.profile-title {
  height: 56px;
  margin: 0 32px 0 27px;
  display: flex;
  align-items: center;
  padding-top: 8px;
  font-size: 15px;
  font-weight: 700;
  color: #504862;
  border-bottom: 1px solid #6f5f8f;
}
.profile-scroll {
  position: relative;
  width: 388px;
  height: 600px;
  margin: 16px 0 0 27px;
  background: #dcd0f3;
}
.lilac-field {
  margin-bottom: 20px;
}
.lilac-field label {
  display: flex;
  align-items: center;
  height: 14px;
  margin-bottom: 9px;
  gap: 3px;
  font-size: 13px;
  color: #6c5d8a;
}
.lilac-field b {
  color: #c92f96;
  font-weight: 400;
}
.cap-info {
  margin-left: 8px;
  color: #6f9be6;
}
.lilac-input {
  width: 369px;
  height: 35px;
  border: 1px solid #cec1ea;
  border-radius: 4px;
}
.lilac-check {
  display: flex;
  align-items: center;
  gap: 5px;
  font-size: 13px;
  color: #75678f;
}
.lilac-check i {
  width: 16px;
  height: 16px;
  border: 1px solid #8c7fa5;
}
.inner-scroll {
  left: 377px;
  top: 4px;
  height: 167px;
  background: #a395bd;
}
.outer-scroll {
  left: 417px;
  top: 4px;
  height: 192px;
  background: #a195b5;
}

.boat {
  left: 447px;
  width: 373px;
  height: 623px;
  overflow: hidden;
  background: #eeeafb;
  border-radius: 6px 6px 0 0;
}
.boat-head {
  height: 53px;
  display: flex;
  align-items: center;
  justify-content: space-between;
  padding: 0 18px 0 19px;
  font-size: 18px;
  font-weight: 700;
  color: #403a50;
  border-bottom: 1px solid #d3cee0;
}
.boat-title {
  height: 20px;
  margin: 20px 0 19px 19px;
  font-size: 15px;
  line-height: 20px;
  font-weight: 700;
  color: #403a50;
}
.boat-field {
  margin-left: 19px;
  height: 83px;
}
.boat-field label {
  display: block;
  height: 16px;
  margin-bottom: 7px;
  font-size: 13px;
  line-height: 16px;
  color: #57516a;
}
.boat-field b {
  color: #d0246e;
  font-weight: 400;
}
.boat-input {
  width: 337px;
  height: 40px;
  border: 1px solid #7a7488;
  border-radius: 4px;
}
.boat-scroll {
  left: 363px;
  top: 4px;
  height: 206px;
}

.status {
  left: 832px;
  width: 427px;
  height: 755px;
  overflow: hidden;
  background: #e3dff0;
}
.status-top {
  height: 395px;
  background: #eeeafb;
  position: relative;
}
.status-head {
  height: 59px;
  margin-right: 11px;
  padding: 9px 0 0 13px;
  display: flex;
  align-items: center;
  justify-content: center;
  font-size: 18px;
  font-weight: 700;
  color: #403a50;
  border-bottom: 1px solid #cfc9dc;
}
.todo-row {
  display: flex;
  justify-content: space-between;
  margin-top: 18px;
  padding: 0 31px 0 30px;
}
.todo-text {
  width: 255px;
  padding-top: 12px;
}
.todo-title {
  font-size: 24px;
  line-height: 30px;
  font-weight: 700;
  color: #403a50;
}
.todo-sub {
  margin-top: 3px;
  font-size: 15px;
  line-height: 18px;
  color: #403a50;
}
.check-list {
  margin: 16px 0 0 47px;
}
.check-item {
  height: 40px;
  display: flex;
  align-items: flex-start;
  font-size: 13px;
  line-height: 20px;
  color: #4f4a60;
}
.check-item i {
  width: 20px;
  height: 20px;
  margin-right: 8px;
  border: 1px solid #7a7585;
  flex: none;
}
.check-item svg {
  margin: 3px 16px 0 8px;
  color: #3aa0d8;
}
.check-item em {
  color: #8a8498;
}
.next-btn {
  width: 180px;
  height: 40px;
  margin: 0 auto;
  position: relative;
  left: 0;
  top: 15px;
  background: #331fe6;
  border-radius: 4px;
  color: #e9e5ff;
  font-size: 13px;
  font-weight: 500;
  display: flex;
  align-items: center;
  justify-content: center;
}

.status-bottom {
  padding: 30px 28px 0 30px;
}
.status-row {
  height: 22px;
  display: flex;
  align-items: center;
  justify-content: space-between;
  font-size: 18px;
  font-weight: 700;
  color: #403a50;
}
.status-row a {
  padding-top: 1px;
  font-family: "Liberation Sans", sans-serif;
  font-size: 13px;
  font-weight: 400;
  color: #4a30d0;
  text-decoration: underline;
}
.today-card {
  height: 170px;
  margin-top: 10px;
  padding: 20px 0 0 17px;
  background: #eeeafb;
  border-radius: 6px;
  font-family: "Liberation Sans", sans-serif;
  font-size: 13px;
  line-height: 15px;
  color: #454053;
}
.today-card p {
  width: 305px;
  margin-bottom: 15px;
}
.calendar-row {
  margin-top: 19px;
}
.calendar {
  height: 90px;
  margin-top: 10px;
  padding: 0 24px 0 16px;
  background: #dbd2ee;
  font-family: "Liberation Sans", sans-serif;
  color: #5a5468;
}
.cal-head {
  height: 39px;
  display: flex;
  align-items: center;
  justify-content: space-between;
  padding: 0 3px 0 11px;
  font-size: 13px;
  font-weight: 700;
  color: #4f4862;
}
.cal-grid {
  display: grid;
  grid-template-columns: repeat(7, 47px);
  text-align: center;
}
.cal-days {
  height: 16px;
  font-size: 14px;
  line-height: 16px;
}
.cal-dates {
  margin-top: 12px;
  font-size: 13px;
  line-height: 16px;
  color: #8b84a0;
}
.status-scroll {
  left: 417px;
  top: 4px;
  height: 249px;
}

/* right panel */
.right-panel {
  width: 269px;
  flex: none;
  display: flex;
  flex-direction: column;
  position: relative;
  background: #fff;
  box-shadow: -2px 0 3px #c8c8c8;
}
.right-close {
  height: 18px;
  background: #dcdcdc;
  display: flex;
  justify-content: flex-end;
  align-items: center;
  padding-right: 9px;
  font-size: 14px;
  color: #555;
}
.right-tabs {
  height: 39px;
  position: relative;
  flex: none;
  border-bottom: 1px solid #ddd;
}
.right-tab {
  position: absolute;
  top: 0;
  height: 38px;
  display: flex;
  align-items: center;
  gap: 4px;
  font-size: 12px;
  color: #555;
}
.right-tab.active {
  color: #3f72d8;
  border-bottom: 3px solid #3f72d8;
  padding-top: 3px;
}
.interactions-tab {
  left: 16px;
  width: 81px;
}
.notes-tab {
  left: 128px;
}
.style-tab {
  left: 209px;
}
.right-label {
  height: 30px;
  display: flex;
  align-items: center;
  justify-content: space-between;
  padding: 0 22px 0 15px;
  font-size: 10px;
  letter-spacing: 1.300px;
  color: #a9a9a9;
}
.new-interaction {
  height: 28px;
  margin: 6px 16px 0;
  background: #2b6ff0;
  border-radius: 2px;
  color: #fff;
  font-size: 14px;
  display: flex;
  align-items: center;
  justify-content: center;
}
.target-icon {
  margin: 26px 0 0 119px;
  flex: none;
}
.right-help {
  margin-top: 13px;
  text-align: center;
  font-size: 10.500px;
  line-height: 14px;
  letter-spacing: .35px;
  color: #aaa;
}
.right-footer {
  margin-top: auto;
  height: 43px;
  display: flex;
  align-items: center;
  padding-left: 23px;
  gap: 6px;
  font-size: 12px;
  color: #3f72d8;
  border-top: 1px solid #ddd;
}
.right-footer i {
  margin-left: 24px;
  font-size: 17px;
  color: #888;
}
```
